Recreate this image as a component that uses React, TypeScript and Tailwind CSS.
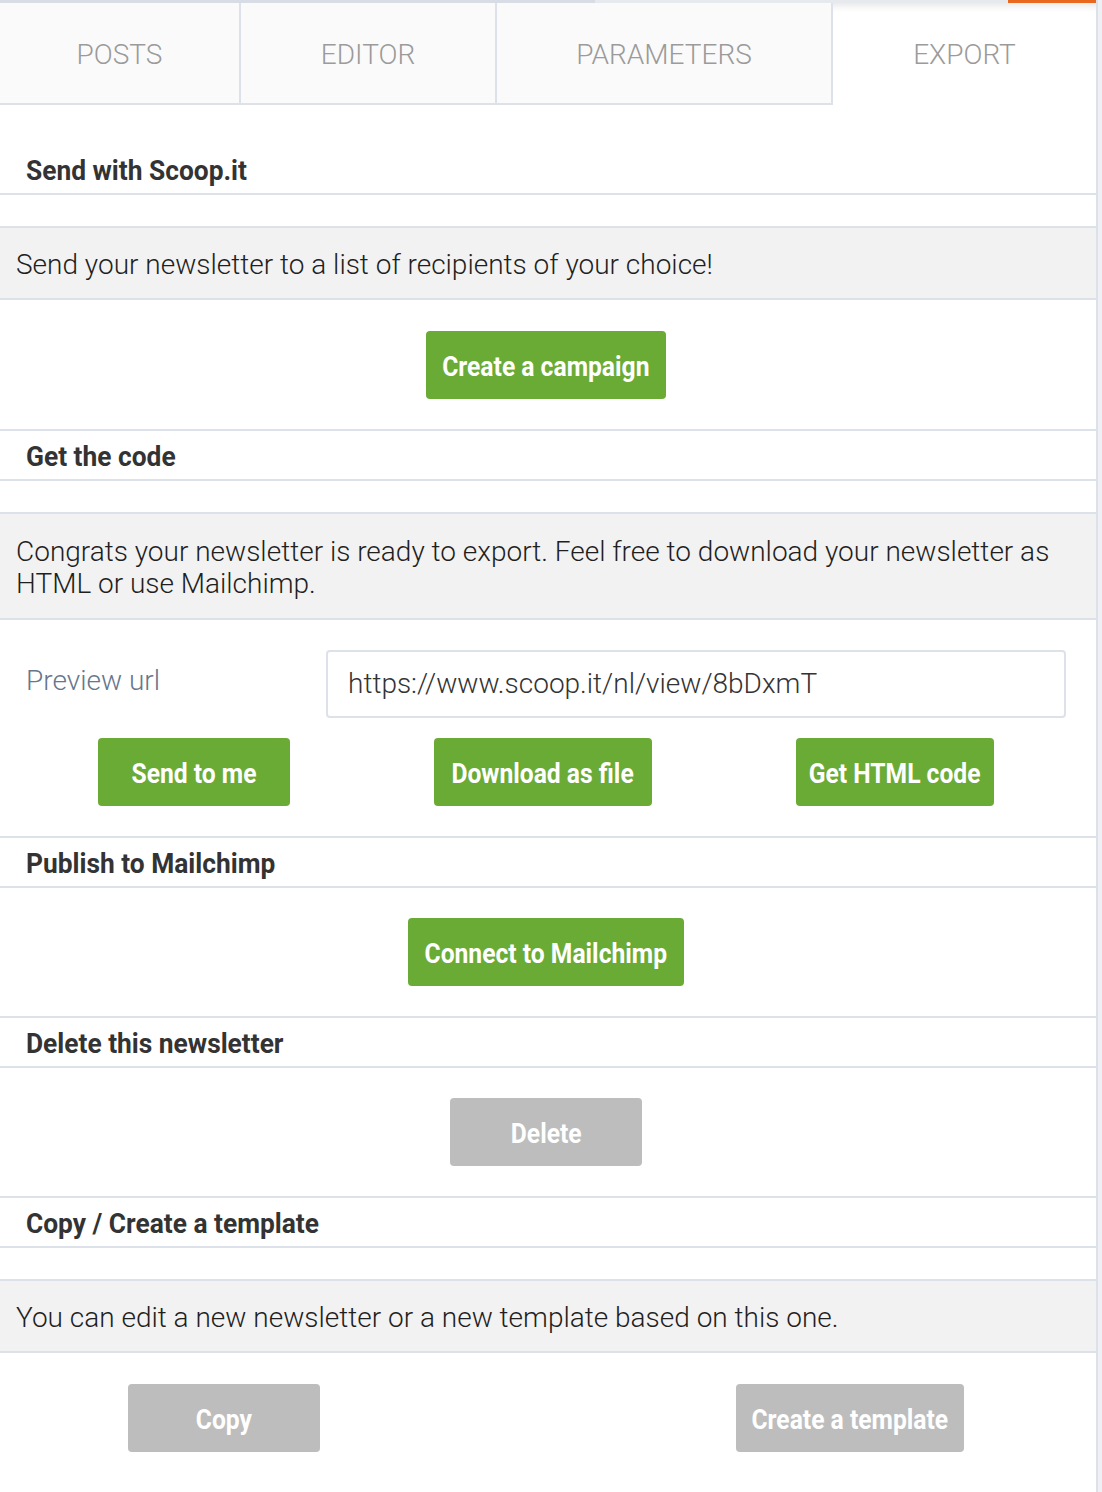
import React from 'react';

const headFont = { fontFamily: 'Roboto, "Liberation Sans", sans-serif' };
const bodyFont = { fontFamily: 'Roboto, "Noto Sans", sans-serif' };

const tabs = [
  { label: 'POSTS', w: 'w-[241px]' },
  { label: 'EDITOR', w: 'w-[256px]' },
  { label: 'PARAMETERS', w: 'w-[336px]' },
];

// condensed look: Roboto bold squeezed horizontally
function Narrow({ children, cls }: { children: React.ReactNode; cls: string }) {
  return (
    <span style={headFont} className={`inline-block whitespace-nowrap ${cls}`}>
      {children}
    </span>
  );
}

function Btn({ label, w, gray }: { label: string; w: string; gray?: boolean }) {
  return (
    <button
      className={`${w} h-[68px] rounded-[4px] text-white text-[28px] font-bold flex items-center justify-center pt-[3px] ${gray ? 'bg-[#bdbdbd]' : 'bg-[#6aab36]'}`}
    >
      <Narrow cls="scale-x-[0.88] origin-center">{label}</Narrow>
    </button>
  );
}

function Header({ title, first }: { title: string; first?: boolean }) {
  return (
    <div
      className={`flex items-center pl-[26px] pt-[2px] border-b-2 border-[#dde2ea] ${first ? 'h-[50px]' : 'h-[52px] border-t-2'}`}
    >
      <span className="text-[28px] font-bold text-[#333]">
        <Narrow cls="scale-x-[0.94] origin-left">{title}</Narrow>
      </span>
    </div>
  );
}

function InfoBox({ children, pad = 'pt-[21px] pb-[17px]' }: { children: React.ReactNode; pad?: string }) {
  return (
    <div className={`mt-[31px] bg-[#f2f2f2] border-y-2 border-[#dde2ea] px-4 ${pad}`}>
      <p style={bodyFont} className="text-[28px] leading-[32px] font-light text-[#1f1f1f]">
        {children}
      </p>
    </div>
  );
}

export default function App() {
  return (
    <div className="w-[1102px] min-h-[1492px] bg-[#eef0f4] flex">
      <div className="w-[1098px] bg-white border-r-2 border-[#dde2ea]">
        {/* top strip */}
        <div className="flex h-[3px]">
          <div className="w-[595px] bg-[#d8dde5]" />
          <div className="w-[413px] bg-[#e6e9ee]" />
          <div className="flex-1 bg-[#e8681f]" />
        </div>

        {/* tabs */}
        <div className="flex h-[102px] shadow-[inset_0_10px_8px_-8px_rgba(0,0,0,0.12)]">
          {tabs.map(t => (
            <div
              key={t.label}
              className={`${t.w} bg-[#fafafa] border-r-2 border-b-2 border-[#dde2ea] flex items-center justify-center pt-[3px]`}
            >
              <span style={bodyFont} className="text-[28px] font-light text-[#9b9b9b]">
                {t.label}
              </span>
            </div>
          ))}
          <div className="flex-1 flex items-center justify-center pt-[2px]">
            <span style={bodyFont} className="text-[28px] font-light text-[#9b9b9b]">
              EXPORT
            </span>
          </div>
        </div>

        <div className="mt-[40px]">
          <Header title="Send with Scoop.it" first />
          <InfoBox>Send your newsletter to a list of recipients of your choice!</InfoBox>
          <div className="pt-[31px] pb-[30px] flex justify-center pr-[4px]">
            <Btn label="Create a campaign" w="w-[240px]" />
          </div>

          <Header title="Get the code" />
          <InfoBox pad="pt-[22px] pb-[18px]">
            Congrats your newsletter is ready to export. Feel free to download your newsletter as HTML or use
            Mailchimp.
          </InfoBox>
          <div className="pt-[30px] pb-[30px]">
            <div className="flex items-center pl-[26px] pr-[30px]">
              <div style={bodyFont} className="w-[300px] text-[28px] font-light text-[#66768c] -mt-[6px]">
                Preview url
              </div>
              <div className="flex-1 h-[68px] border-2 border-[#dde2ea] rounded-[4px] flex items-center pl-[20px]">
                <span style={bodyFont} className="text-[28px] font-light text-[#333]">
                  https://www.scoop.it/nl/view/8bDxmT
                </span>
              </div>
            </div>
            <div className="mt-[20px] grid grid-cols-[356px_342px_1fr] pl-[16px] pr-[21px]">
              <div className="flex justify-center">
                <Btn label="Send to me" w="w-[192px]" />
              </div>
              <div className="flex justify-center">
                <Btn label="Download as file" w="w-[218px]" />
              </div>
              <div className="flex justify-center">
                <Btn label="Get HTML code" w="w-[198px]" />
              </div>
            </div>
          </div>

          <Header title="Publish to Mailchimp" />
          <div className="pt-[30px] pb-[30px] flex justify-center pr-[4px]">
            <Btn label="Connect to Mailchimp" w="w-[276px]" />
          </div>

          <Header title="Delete this newsletter" />
          <div className="pt-[30px] pb-[30px] flex justify-center pr-[4px]">
            <Btn label="Delete" w="w-[192px]" gray />
          </div>

          <Header title="Copy / Create a template" />
          <InfoBox>You can edit a new newsletter or a new template based on this one.</InfoBox>
          <div className="pt-[31px] pb-[40px] flex">
            <div className="ml-[128px]">
              <Btn label="Copy" w="w-[192px]" gray />
            </div>
            <div className="ml-[416px]">
              <Btn label="Create a template" w="w-[228px]" gray />
            </div>
          </div>
        </div>
      </div>
    </div>
  );
}
